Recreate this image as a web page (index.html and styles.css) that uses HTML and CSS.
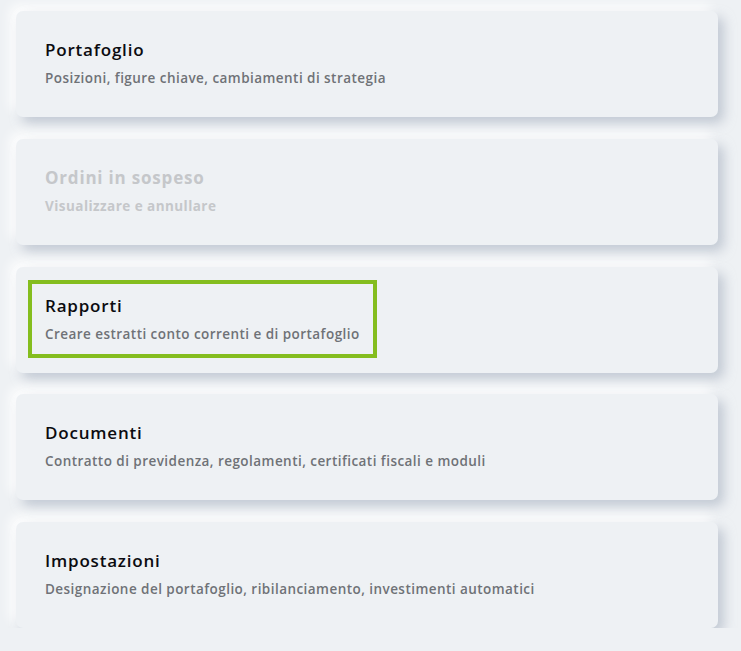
FILE: index.html
```html
<!DOCTYPE html>
<html lang="it">
<head>
<meta charset="utf-8">
<title>Menu</title>
<link rel="stylesheet" href="styles.css">
</head>
<body>
<div class="list">
  <div class="card">
    <a class="link" href="#"><span class="title">Portafoglio</span><span class="sub">Posizioni, figure chiave, cambiamenti di strategia</span></a>
  </div>
  <div class="card disabled">
    <a class="link" href="#"><span class="title">Ordini in sospeso</span><span class="sub">Visualizzare e annullare</span></a>
  </div>
  <div class="card">
    <a class="link focused" href="#"><span class="title">Rapporti</span><span class="sub">Creare estratti conto correnti e di portafoglio</span></a>
  </div>
  <div class="card">
    <a class="link" href="#"><span class="title">Documenti</span><span class="sub">Contratto di previdenza, regolamenti, certificati fiscali e moduli</span></a>
  </div>
  <div class="card">
    <a class="link" href="#"><span class="title">Impostazioni</span><span class="sub">Designazione del portafoglio, ribilanciamento, investimenti automatici</span></a>
  </div>
</div>
</body>
</html>
```

FILE: styles.css
```css
html, body {
  margin: 0;
  padding: 0;
  background: #eef1f4;
  font-family: "Open Sans", "Noto Sans", sans-serif;
}
.list {
  display: flex;
  flex-direction: column;
  gap: 21.75px;
  padding: 11px 23px 0 16px;
}
.card {
  background: #eef1f4;
  border-radius: 7px;
  height: 106px;
  box-sizing: border-box;
  padding: 13px 12px;
  box-shadow: 6px 6px 12px rgba(165, 175, 190, 0.6), -6px -6px 12px rgba(255, 255, 255, 0.95);
}
.link {
  display: inline-flex;
  flex-direction: column;
  gap: 8px;
  border: 4px solid transparent;
  padding: 11px 13px 11px 13px;
  text-decoration: none;
}
.link.focused {
  border-color: #84bd1e;
}
.title {
  font-size: 17px;
  line-height: 22px;
  font-weight: 600;
  color: #0b0b10;
  letter-spacing: 0.8px;
}
.sub {
  font-size: 13.5px;
  line-height: 18px;
  font-weight: 600;
  color: #6f7277;
  letter-spacing: 0.45px;
}
.disabled .title,
.disabled .sub {
  color: #c5c7ca;
  font-weight: 700;
}
```
